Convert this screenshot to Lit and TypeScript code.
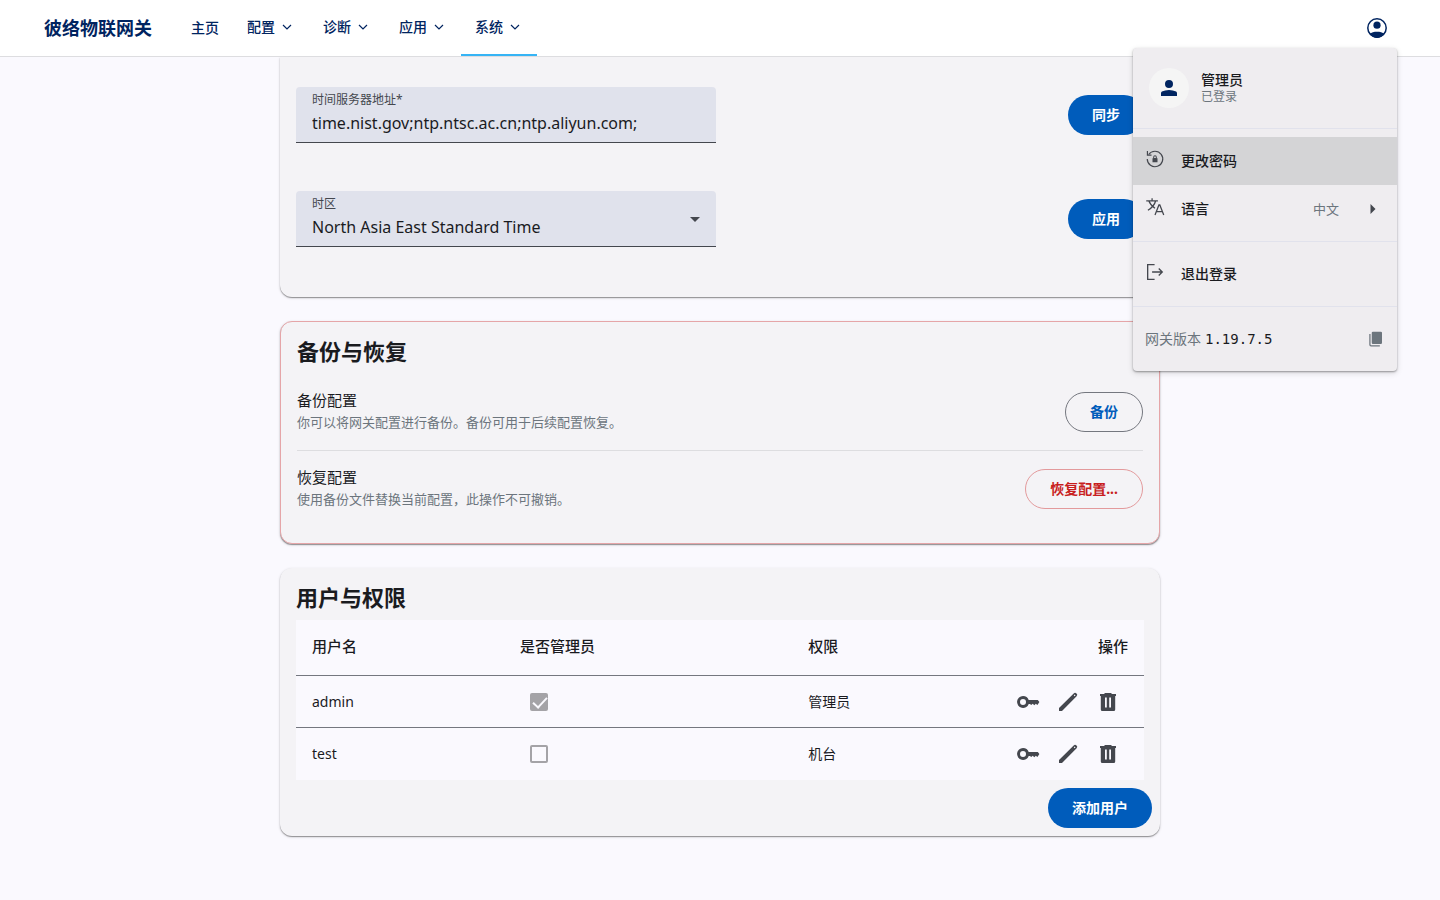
import { LitElement, html, css, svg } from "lit";
import { customElement, state } from "lit/decorators.js";

const icon = (paths: unknown, cls = "icon") =>
  html`<svg class=${cls} viewBox="0 0 24 24" aria-hidden="true">${paths}</svg>`;

const chevron = svg`<path d="M6 9l6 6 6-6" fill="none" stroke="currentColor" stroke-width="1.800"/>`;
const person = svg`<path d="M12 12a4 4 0 1 0 0-8 4 4 0 0 0 0 8zM4 20v-2.800q0-1 .9-1.600Q8 14 12 14t7.100 1.600q.9.600.9 1.600V20z"/>`;
const account = svg`<circle cx="12" cy="12" r="9.200" fill="none" stroke="currentColor" stroke-width="1.500"/><circle cx="12" cy="9.200" r="3.600"/><path d="M4.500 17.800C6.500 16.300 9 15.700 12 15.700s5.500.6 7.500 2.100C17.700 20.300 15 22 12 22s-5.700-1.700-7.500-4.200z"/>`;
const resetLock = svg`<g fill="none" stroke="currentColor" stroke-width="1.400"><path d="M4.400 6.600A9.300 9.300 0 1 1 2.700 12"/><path d="M2.900 2.500v4.900h4.900"/></g><path d="M9 11h.8V9.800a2.200 2.200 0 0 1 4.400 0V11h.8v5H9zm2-.1h2V9.800a1 1 0 0 0-2 0z"/>`;
const translate = svg`<g fill="none" stroke="currentColor" stroke-width="1.500"><path d="M1.500 4.500h14M8.500 1.500v3M12.800 4.500c-1 4-4.500 8.500-9.300 11.500M4.500 4.500c1.500 4 4.500 7 7.500 9"/><path d="M12 21.500l4.700-12h1.100l4.700 12M13.600 17.500h7.300"/></g>`;
const logout = svg`<g fill="none" stroke="currentColor" stroke-width="1.600"><path d="M11.500 3.200H3.200v17.600h8.300M8.500 12h12M16.500 7.800l4.200 4.200-4.200 4.200"/></g>`;
const copy = svg`<path d="M9.500 3.200h9.500a1.400 1.400 0 0 1 1.400 1.400v12a1.400 1.400 0 0 1-1.400 1.400H9.500a1.400 1.400 0 0 1-1.400-1.400v-12a1.400 1.400 0 0 1 1.400-1.400z"/><path d="M5.900 6v13a1.300 1.300 0 0 0 1.300 1.300h10.600" fill="none" stroke="currentColor" stroke-width="1.500"/>`;
const right = svg`<path d="M9.500 7l5 5-5 5z"/>`;
const key = svg`<path fill-rule="evenodd" d="M7 6a6 6 0 0 1 5.700 4H21.800l1.600 2-2 3-1.600-1.200-1.500 1.400-1.600-1.400-1.500 1.200L14 14h-1.300A6 6 0 1 1 7 6zm0 3a3 3 0 1 0 0 6 3 3 0 0 0 0-6z"/>`;
const pencil = svg`<path fill-rule="evenodd" d="M3 21v-3L17.700 3.400a1.900 1.900 0 0 1 2.700 0l.2.200a1.900 1.900 0 0 1 0 2.700L6 21zM18.600 4.600l-.8.8.9.9.8-.8z"/>`;
const trash = svg`<path fill-rule="evenodd" d="M4 4h4.500V3h7v1H20v2h-.8v13.500a1.500 1.500 0 0 1-1.500 1.500H6.300a1.500 1.500 0 0 1-1.500-1.500V6H4zm5 3.500v10h1.800v-10zm4.200 0v10H15v-10z"/>`;

interface User {
  name: string;
  admin: boolean;
  role: string;
}

@customElement("app-root")
export class AppRoot extends LitElement {
  @state() private users: User[] = [
    { name: "admin", admin: true, role: "管理员" },
    { name: "test", admin: false, role: "机台" },
  ];

  static styles = css`
    :host {
      display: flex;
      flex-direction: column;
      height: 100vh;
      overflow: hidden;
      background: #faf9fe;
      color: #1a1b1f;
      font-family: "Noto Sans", "Noto Sans CJK SC", sans-serif;
      font-size: 14px;
      line-height: 20px;
    }
    * { box-sizing: border-box; }
    h2, p { margin: 0; }
    button, input, select { font: inherit; color: inherit; }
    button { cursor: pointer; }
    svg { fill: currentColor; flex: none; }
    .icon { width: 24px; height: 24px; }
    .icon-m { width: 20px; height: 20px; }
    .icon-s { width: 16px; height: 16px; }

    .header {
      position: relative;
      z-index: 2;
      flex: none;
      display: flex;
      align-items: center;
      height: 57px;
      padding: 0 43px 0 44px;
      background: #fff;
      border-bottom: 1px solid #dddde0;
      color: #002460;
    }
    .brand { font-size: 18px; font-weight: 700; color: inherit; text-decoration: none; }
    .nav { display: flex; align-self: stretch; margin-left: 25px; flex: 1; }
    .nav-item {
      display: flex;
      align-items: center;
      gap: 4px;
      padding: 0 14px;
      border: 0;
      background: none;
      color: inherit;
      font-weight: 500;
      text-decoration: none;
    }
    .tab { border-bottom: 2px solid transparent; font-weight: 500; }
    .tab.active { border-bottom-color: #36b4f5; }
    .icon-btn {
      display: inline-flex;
      align-items: center;
      justify-content: center;
      width: 40px;
      height: 40px;
      padding: 0;
      border: 0;
      border-radius: 50%;
      background: none;
    }

    .menu {
      position: absolute;
      top: 48px;
      right: 43px;
      width: 264px;
      border-radius: 4px;
      background: #efedf0;
      color: #1a1b1f;
      box-shadow: 0 1px 2px rgba(0, 0, 0, 0.35), 0 2px 6px rgba(0, 0, 0, 0.14);
    }
    .profile { display: flex; align-items: center; gap: 12px; height: 80px; padding: 0 16px; }
    .avatar {
      display: flex;
      align-items: center;
      justify-content: center;
      width: 40px;
      height: 40px;
      border-radius: 50%;
      background: #f5f5f5;
      color: #002460;
    }
    .profile-name { font-weight: 500; line-height: 18px; }
    .profile-state { font-size: 12px; line-height: 16px; color: #6c757d; }
    .group { padding: 8px 0; border-top: 1px solid #e1e2ec; }
    .menu-item {
      display: flex;
      align-items: center;
      gap: 12px;
      width: 100%;
      height: 48px;
      padding: 0 12px;
      border: 0;
      background: none;
      text-align: left;
      font-weight: 500;
    }
    .menu-item.current { background: #d4d4d6; }
    .menu-icon { display: flex; width: 24px; padding-bottom: 4px; color: #44474e; }
    .menu-text { flex: 1; }
    .menu-value { font-size: 13px; font-weight: 400; color: #6c757d; }
    .menu-arrow { display: flex; margin-left: 10px; color: #44474e; }
    .version { display: flex; align-items: center; gap: 4px; height: 48px; padding: 0 12px; color: #6c757d; }
    .version-number { flex: 1; font-family: "DejaVu Sans Mono", monospace; color: #1a1b1f; }
    .copy { width: 20px; height: 20px; }

    .page { flex: 1; min-height: 0; overflow: hidden; padding: 0 24px; }
    .content { display: grid; gap: 24px; max-width: 880px; margin: 0 auto; }
    .card {
      border-radius: 12px;
      background: #f4f3f6;
      box-shadow: 0 1px 1px rgba(0, 0, 0, 0.35), 0 1px 3px rgba(0, 0, 0, 0.16);
    }
    .time { display: grid; gap: 48px; padding: 30px 16px 50px; border-radius: 0 0 12px 12px; }
    .setting { display: flex; align-items: center; justify-content: space-between; gap: 16px; }
    .field {
      position: relative;
      width: 420px;
      height: 56px;
      display: flex;
      flex-direction: column;
      padding: 5px 16px 0;
      border-radius: 4px 4px 0 0;
      border-bottom: 1px solid #44474e;
      background: #e0e2ec;
    }
    .field-label { font-size: 12px; line-height: 16px; color: #44474e; }
    .control {
      width: 100%;
      height: 30px;
      padding: 0;
      border: 0;
      outline: 0;
      background: none;
      appearance: none;
      font-size: 16px;
      line-height: 30px;
    }
    .caret {
      position: absolute;
      right: 16px;
      top: 26px;
      border: 5px solid transparent;
      border-top-color: #44474e;
      border-bottom: 0;
      pointer-events: none;
    }

    .btn {
      height: 40px;
      padding: 0 24px;
      border: 0;
      border-radius: 20px;
      background: #005cbb;
      color: #fff;
      font-weight: 700;
      white-space: nowrap;
    }
    .outlined { border: 1px solid #74777f; background: none; color: #005cbb; }
    .danger { border-color: #e39a9c; color: #c81e1e; }

    .title { font-size: 22px; line-height: 26px; font-weight: 700; margin-bottom: 10px; }
    .backup { padding: 16px; border: 1px solid #e5a5a8; }
    .backup-row {
      display: flex;
      align-items: center;
      justify-content: space-between;
      gap: 16px;
      height: 76px;
    }
    .backup-row + .backup-row { height: 77px; border-top: 1px solid #dddde0; }
    .row-text { padding-bottom: 4px; }
    .row-title { font-size: 15px; line-height: 24px; }
    .row-note { font-size: 13px; line-height: 20px; color: #6c757d; }

    .users { padding-top: 16px; }
    .users-body { padding: 0 16px; }
    .table { width: 100%; border-collapse: separate; border-spacing: 0; table-layout: fixed; background: #faf9fe; }
    .table th, .table td { padding: 0 16px; border-bottom: 1px solid #74777f; }
    .table th { height: 56px; padding-bottom: 4px; font-size: 15px; font-weight: 500; text-align: left; }
    .table td { height: 52px; }
    .table tbody tr:last-child td { border-bottom: 0; }
    .col-name { width: 208px; }
    .col-admin { width: 34%; }
    .table .end { text-align: right; }
    .tools { display: flex; justify-content: flex-end; color: #44474e; }
    .check {
      appearance: none;
      display: block;
      width: 18px;
      height: 18px;
      margin: 0 10px;
      border: 2px solid #a4a3a7;
      border-radius: 2px;
    }
    .check:checked {
      background: #a4a3a7;
      border-width: 0;
    }
    .check:checked::after {
      content: "";
      display: block;
      width: 6px;
      height: 12px;
      margin: 1px 6px;
      border: solid #faf9fe;
      border-width: 0 2px 2px 0;
      transform: rotate(43deg);
    }
    .actions { display: flex; justify-content: flex-end; padding: 8px; }
  `;

  private tab(label: string, active = false) {
    return html`<button class="nav-item tab ${active ? "active" : ""}">${label}${icon(chevron, "icon-s")}</button>`;
  }

  render() {
    return html`
      <header class="header">
        <a class="brand" href="#">彼络物联网关</a>
        <nav class="nav">
          <a class="nav-item" href="#">主页</a>
          ${this.tab("配置")}${this.tab("诊断")}${this.tab("应用")}${this.tab("系统", true)}
        </nav>
        <button class="icon-btn" aria-label="账户">${icon(account)}</button>
        <div class="menu">
          <div class="profile">
            <div class="avatar">${icon(person)}</div>
            <div>
              <div class="profile-name">管理员</div>
              <div class="profile-state">已登录</div>
            </div>
          </div>
          <div class="group">
            <button class="menu-item current"><span class="menu-icon">${icon(resetLock, "icon-m")}</span><span class="menu-text">更改密码</span></button>
            <button class="menu-item">
              <span class="menu-icon">${icon(translate, "icon-m")}</span><span class="menu-text">语言</span>
              <span class="menu-value">中文</span><span class="menu-arrow">${icon(right)}</span>
            </button>
          </div>
          <div class="group">
            <button class="menu-item"><span class="menu-icon">${icon(logout, "icon-m")}</span><span class="menu-text">退出登录</span></button>
          </div>
          <div class="group">
            <div class="version">
              <span>网关版本</span><span class="version-number">1.19.7.5</span>
              <button class="icon-btn copy" aria-label="复制">${icon(copy, "icon-m")}</button>
            </div>
          </div>
        </div>
      </header>

      <main class="page">
        <div class="content">
          <section class="card time">
            <div class="setting">
              <div class="field">
                <label class="field-label" for="servers">时间服务器地址*</label>
                <input class="control" id="servers" value="time.nist.gov;ntp.ntsc.ac.cn;ntp.aliyun.com;" />
              </div>
              <button class="btn">同步</button>
            </div>
            <div class="setting">
              <div class="field">
                <label class="field-label" for="zone">时区</label>
                <select class="control" id="zone"><option>North Asia East Standard Time</option></select>
                <span class="caret"></span>
              </div>
              <button class="btn">应用</button>
            </div>
          </section>

          <section class="card backup">
            <h2 class="title">备份与恢复</h2>
            <div class="backup-row">
              <div class="row-text">
                <p class="row-title">备份配置</p>
                <p class="row-note">你可以将网关配置进行备份。备份可用于后续配置恢复。</p>
              </div>
              <button class="btn outlined">备份</button>
            </div>
            <div class="backup-row">
              <div class="row-text">
                <p class="row-title">恢复配置</p>
                <p class="row-note">使用备份文件替换当前配置，此操作不可撤销。</p>
              </div>
              <button class="btn outlined danger">恢复配置...</button>
            </div>
          </section>

          <section class="card users">
            <div class="users-body">
              <h2 class="title">用户与权限</h2>
              <table class="table">
                <colgroup><col class="col-name" /><col class="col-admin" /><col /><col /></colgroup>
                <thead>
                  <tr><th>用户名</th><th>是否管理员</th><th>权限</th><th class="end">操作</th></tr>
                </thead>
                <tbody>
                  ${this.users.map(
                    (u) => html`<tr>
                      <td>${u.name}</td>
                      <td><input class="check" type="checkbox" aria-label="是否管理员" .checked=${u.admin} disabled /></td>
                      <td>${u.role}</td>
                      <td>
                        <div class="tools">
                          <button class="icon-btn" aria-label="重置密码">${icon(key)}</button>
                          <button class="icon-btn" aria-label="编辑">${icon(pencil)}</button>
                          <button class="icon-btn" aria-label="删除">${icon(trash)}</button>
                        </div>
                      </td>
                    </tr>`
                  )}
                </tbody>
              </table>
            </div>
            <div class="actions"><button class="btn">添加用户</button></div>
          </section>
        </div>
      </main>
    `;
  }
}
